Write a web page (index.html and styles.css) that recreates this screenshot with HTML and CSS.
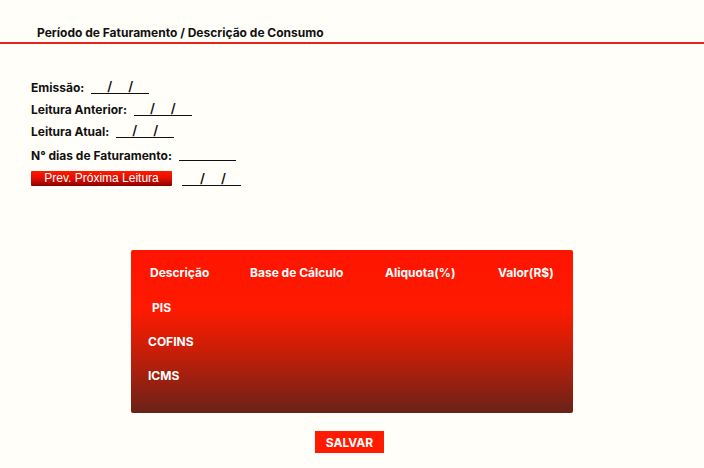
FILE: index.html
```html
<!DOCTYPE html>
<html lang="pt-BR">
<head>
<meta charset="utf-8">
<link rel="stylesheet" href="styles.css">
</head>
<body>
<header class="topbar">
  <h1 class="title">Período de Faturamento / Descrição de Consumo</h1>
</header>
<section class="fields">
  <div class="row"><span class="label">Emissão:</span><span class="date"><i></i>/<i></i>/<i></i></span></div>
  <div class="row"><span class="label">Leitura Anterior:</span><span class="date"><i></i>/<i></i>/<i></i></span></div>
  <div class="row"><span class="label">Leitura Atual:</span><span class="date"><i></i>/<i></i>/<i></i></span></div>
  <div class="row"><span class="label">N° dias de Faturamento:</span><span class="blank"></span></div>
  <div class="row row-btn"><button class="prev">Prev. Próxima Leitura</button><span class="date date-wide"><i></i>/<i></i>/<i></i></span></div>
</section>
<section class="table">
  <div class="thead">
    <span class="c1">Descrição</span>
    <span class="c2">Base de Cálculo</span>
    <span class="c3">Aliquota(%)</span>
    <span class="c4">Valor(R$)</span>
  </div>
  <div class="trow pis">PIS</div>
  <div class="trow">COFINS</div>
  <div class="trow">ICMS</div>
</section>
<div class="actions"><button class="save">SALVAR</button></div>
</body>
</html>
```
FILE: styles.css
```css
html, body {
  margin: 0;
  padding: 0;
  background: #fffef9;
  font-family: Inter, "Liberation Sans", sans-serif;
  color: #111;
}
.topbar {
  height: 44px;
  border-bottom: 2px solid #e8241a;
  box-sizing: border-box;
  padding: 26px 0 0 37px;
}
.title {
  margin: 0;
  font-size: 12px;
  font-weight: 700;
  line-height: 14px;
}
.fields {
  padding: 29px 0 0 31px;
  display: flex;
  flex-direction: column;
}
.row {
  display: flex;
  align-items: flex-end;
  height: 22px;
  font-size: 12px;
  font-weight: 700;
}
.row:nth-child(4) { height: 24px; }
.row-btn { height: 24px; align-items: center; margin-top: 3px; }
.label { margin-right: 7px; line-height: 14px; }
.date {
  display: inline-flex;
  align-items: flex-end;
  border-bottom: 1px solid #111;
  font-weight: 600;
  font-size: 13px;
  line-height: 14px;
  margin-bottom: 1px;
}
.date i { display: inline-block; width: 16px; }
.blank {
  display: inline-block;
  width: 57px;
  border-bottom: 1px solid #111;
  margin-bottom: 2px;
}
.prev {
  width: 141px;
  height: 15px;
  padding: 0;
  border: none;
  border-radius: 1px;
  background: linear-gradient(#ff1a00 0%, #e01000 50%, #8a0000 100%);
  color: #fff;
  font-family: "Liberation Sans", Arial, sans-serif;
  font-size: 12px;
  line-height: 15px;
  margin-right: 10px;
}
.date-wide { margin-top: 2px; }
.date-wide i:first-child { width: 18px; }
.date-wide i:last-child { width: 15px; }
.table {
  margin: 60px 0 0 131px;
  width: 442px;
  height: 163px;
  border-radius: 2px;
  background: linear-gradient(#ff1400 0%, #ff1a00 36%, #c81e08 62%, #6a2218 100%);
  color: #fff;
  font-weight: 700;
  font-size: 12px;
  box-sizing: border-box;
  padding-top: 16px;
}
.thead {
  display: grid;
  grid-template-columns: 100px 135px 113px auto;
  padding-left: 19px;
  height: 14px;
  line-height: 14px;
}
.trow {
  padding-left: 17px;
  margin-top: 20px;
  line-height: 14px;
}
.trow.pis { padding-left: 21px; margin-top: 21px; }
.actions {
  display: flex;
  padding: 18px 0 0 315px;
}
.save {
  width: 69px;
  height: 22px;
  border: none;
  padding: 0;
  background: #ff1a00;
  color: #fff;
  font-family: Inter, "Liberation Sans", sans-serif;
  font-weight: 700;
  font-size: 12px;
}
```
